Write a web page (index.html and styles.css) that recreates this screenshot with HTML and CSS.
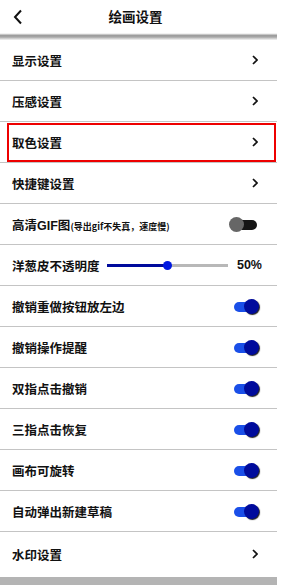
FILE: index.html
```html
<!DOCTYPE html>
<html lang="zh">
<head>
<meta charset="utf-8">
<link rel="stylesheet" href="styles.css">
</head>
<body>
<div class="app">
  <header class="topbar">
    <svg class="back" width="12" height="16" viewBox="0 0 12 16"><path d="M9 1.5 L3 8 L9 14.5" fill="none" stroke="#111" stroke-width="2"/></svg>
    <div class="title">绘画设置</div>
  </header>
  <div class="band"></div>
  <ul class="list">
    <li class="row"><span class="label">显示设置</span><svg class="chev" width="6" height="10" viewBox="0 0 6 10"><path d="M1 1 L5 5 L1 9" fill="none" stroke="#111" stroke-width="1.7"/></svg></li>
    <li class="row"><span class="label">压感设置</span><svg class="chev" width="6" height="10" viewBox="0 0 6 10"><path d="M1 1 L5 5 L1 9" fill="none" stroke="#111" stroke-width="1.7"/></svg></li>
    <li class="row selected"><span class="label">取色设置</span><svg class="chev" width="6" height="10" viewBox="0 0 6 10"><path d="M1 1 L5 5 L1 9" fill="none" stroke="#111" stroke-width="1.7"/></svg></li>
    <li class="row"><span class="label">快捷键设置</span><svg class="chev" width="6" height="10" viewBox="0 0 6 10"><path d="M1 1 L5 5 L1 9" fill="none" stroke="#111" stroke-width="1.7"/></svg></li>
    <li class="row"><span class="label">高清<span class="latin">GIF</span>图<small>(导出gif不失真，速度慢)</small></span><span class="toggle off"><span class="knob"></span></span></li>
    <li class="row"><span class="label">洋葱皮不透明度</span>
      <span class="slider"><span class="fill" style="width:50%"></span><span class="thumb" style="left:50%"></span></span>
      <span class="pct">50%</span></li>
    <li class="row"><span class="label">撤销重做按钮放左边</span><span class="toggle on"><span class="knob"></span></span></li>
    <li class="row"><span class="label">撤销操作提醒</span><span class="toggle on"><span class="knob"></span></span></li>
    <li class="row"><span class="label">双指点击撤销</span><span class="toggle on"><span class="knob"></span></span></li>
    <li class="row"><span class="label">三指点击恢复</span><span class="toggle on"><span class="knob"></span></span></li>
    <li class="row"><span class="label">画布可旋转</span><span class="toggle on"><span class="knob"></span></span></li>
    <li class="row"><span class="label">自动弹出新建草稿</span><span class="toggle on"><span class="knob"></span></span></li>
    <li class="row"><span class="label">水印设置</span><svg class="chev" width="6" height="10" viewBox="0 0 6 10"><path d="M1 1 L5 5 L1 9" fill="none" stroke="#111" stroke-width="1.7"/></svg></li>
  </ul>
  <div class="bottom"></div>
</div>
</body>
</html>
```
FILE: styles.css
```css
* { box-sizing: border-box; }
html, body { margin: 0; padding: 0; background: #fff; }
body { font-family: "Noto Sans CJK SC", "Liberation Sans", sans-serif; color: #111; }
.app { width: 277px; height: 585px; display: flex; flex-direction: column; }
.topbar { height: 33px; position: relative; display: flex; align-items: center; justify-content: center; }
.back { position: absolute; left: 12px; top: 9px; }
.title { font-size: 13.5px; font-weight: 700; margin-left: -6px; margin-top: -1px; }
.band { height: 7px; background: linear-gradient(#f2f2f2 0, #f2f2f2 1px, #9a9a9a 2px, #a6a6a6 4px, #dcdcdc 6px, #f4f4f4 7px); }
.list { list-style: none; margin: 0; padding: 0; }
.row { height: 41px; display: flex; align-items: center; padding: 0 19px 0 12px; border-bottom: 1px solid #c4c4c4; position: relative; font-size: 12.5px; font-weight: 700; }
.row:last-child { border-bottom: none; height: 44px; }
.row.selected::after { content: ""; position: absolute; left: 7px; right: 1px; top: 1px; bottom: 0; border: 2px solid #ee0000; }
.label { flex: 1; white-space: nowrap; }
.latin { font-family: "Liberation Sans", sans-serif; }
.label small { font-size: 9px; font-weight: 700; }
.chev { display: block; margin-right: 0; }
.toggle { width: 26px; height: 14px; position: relative; margin-right: -1px; }
.toggle::before { content: ""; position: absolute; left: 1px; right: 2px; top: 3px; height: 10px; border-radius: 5px; }
.toggle.on::before { background: #1a4fe8; }
.toggle.off::before { background: #141414; }
.knob { position: absolute; top: 0; width: 15px; height: 15px; border-radius: 50%; }
.toggle.on .knob { right: 0; background: #000b9c; box-shadow: 1px 1px 1px #222; }
.toggle.off .knob { left: -4px; background: #666; }
.slider { position: relative; width: 121px; height: 3px; background: #b8b8b8; margin-right: 9px; }
.fill { position: absolute; left: 0; top: 0; height: 3px; background: #000b9c; }
.thumb { position: absolute; top: -3px; width: 9px; height: 9px; margin-left: -4px; border-radius: 50%; background: #0018e0; }
.pct { font-family: "Liberation Sans", sans-serif; font-size: 12.5px; font-weight: 700; margin-right: -4px; }
.bottom { flex: 1; background: #b4b4b4; margin-top: 1px; }
```
